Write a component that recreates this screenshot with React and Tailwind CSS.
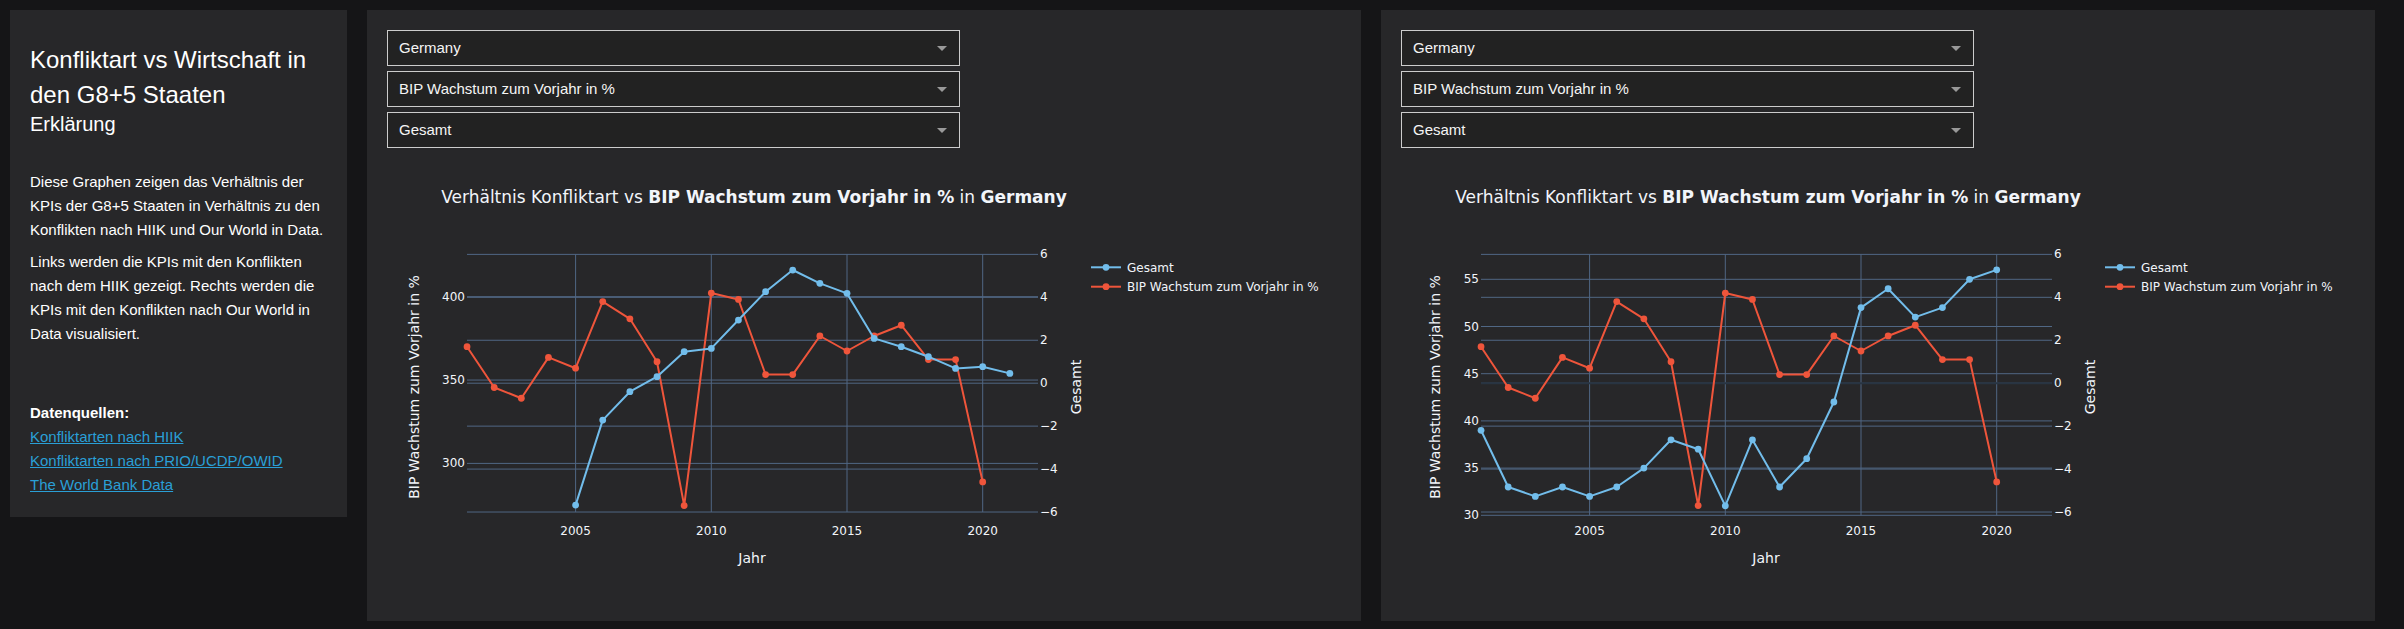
import React from 'react';

// Datenreihen (aus den Graphen abgelesen)
const YEARS_BIP = [2001, 2002, 2003, 2004, 2005, 2006, 2007, 2008, 2009, 2010, 2011, 2012, 2013, 2014, 2015, 2016, 2017, 2018, 2019, 2020];
const BIP = [1.7, -0.2, -0.7, 1.2, 0.7, 3.8, 3.0, 1.0, -5.7, 4.2, 3.9, 0.4, 0.4, 2.2, 1.5, 2.2, 2.7, 1.1, 1.1, -4.6];

const HIIK = [
  [2005, 275], [2006, 326], [2007, 343], [2008, 352], [2009, 367], [2010, 369], [2011, 386],
  [2012, 403], [2013, 416], [2014, 408], [2015, 402], [2016, 375], [2017, 370], [2018, 364],
  [2019, 357], [2020, 358], [2021, 354],
];

const OWID = [
  [2001, 39], [2002, 33], [2003, 32], [2004, 33], [2005, 32], [2006, 33], [2007, 35], [2008, 38],
  [2009, 37], [2010, 31], [2011, 38], [2012, 33], [2013, 36], [2014, 42], [2015, 52], [2016, 54],
  [2017, 51], [2018, 52], [2019, 55], [2020, 56],
];

const GRID = '#506784';
const BLUE = '#72bdeb';
const RED = '#ef553b';
const FONT = '"DejaVu Sans", Verdana, sans-serif';

const xOf = (year) => 188.6 + (year - 2005) * 27.14;
const yRight = (v) => 223.2 - v * 21.47;

function Series({ points, color }) {
  const d = points.map(([x, y], i) => `${i ? 'L' : 'M'}${x.toFixed(1)},${y.toFixed(1)}`).join(' ');
  return (
    <g>
      <path d={d} fill="none" stroke={color} strokeWidth="2" strokeLinejoin="round" />
      {points.map(([x, y], i) => (
        <circle key={i} cx={x} cy={y} r="3.4" fill={color} />
      ))}
    </g>
  );
}

function Chart({ leftTicks, yLeft, blue, leftTitleX, bottom, zeroline }) {
  const top = 94.3;
  const x0 = 80;
  const x1 = 651;

  const bluePts = blue.map(([yr, v]) => [xOf(yr), yLeft(v)]);
  const redPts = YEARS_BIP.map((yr, i) => [xOf(yr), yRight(BIP[i])]);

  return (
    <svg width="955" height="450" viewBox="0 0 955 450" className="block mt-[12px]" style={{ fontFamily: FONT }}>
      {/* Titel */}
      <text x="367" y="43" textAnchor="middle" fontSize="17" fill="#f2f5fa">
        Verhältnis Konfliktart vs <tspan fontWeight="700">BIP Wachstum zum Vorjahr in %</tspan> in{' '}
        <tspan fontWeight="700">Germany</tspan>
      </text>

      {/* vertikale Gitterlinien */}
      {[2005, 2010, 2015, 2020].map((yr) => (
        <g key={yr}>
          <line x1={xOf(yr)} x2={xOf(yr)} y1={top} y2={bottom} stroke={GRID} strokeWidth="1" />
          <text x={xOf(yr)} y="375" textAnchor="middle" fontSize="12" fill="#f2f5fa">{yr}</text>
        </g>
      ))}

      {/* rechte Achse */}
      {[6, 4, 2, 0, -2, -4, -6].map((v) => (
        <g key={v}>
          <line x1={x0} x2={x1} y1={yRight(v)} y2={yRight(v)} stroke={GRID} strokeWidth="1" />
          <text x="653" y={yRight(v) + 4} fontSize="12" fill="#f2f5fa">
            {v < 0 ? `\u2212${-v}` : v}
          </text>
        </g>
      ))}
      {zeroline && <line x1={x0} x2={x1} y1={yRight(0)} y2={yRight(0)} stroke="#283442" strokeWidth="2" />}

      {/* linke Achse */}
      {leftTicks.map((v) => (
        <g key={v}>
          <line x1={x0} x2={x1} y1={yLeft(v)} y2={yLeft(v)} stroke={GRID} strokeWidth="1" />
          <text x="78" y={yLeft(v) + 4} textAnchor="end" fontSize="12" fill="#f2f5fa">{v}</text>
        </g>
      ))}

      <Series points={redPts} color={RED} />
      <Series points={bluePts} color={BLUE} />

      {/* Achsentitel */}
      <text x="365" y="403" textAnchor="middle" fontSize="14" fill="#f2f5fa">Jahr</text>
      <text
        x={leftTitleX}
        y="227"
        textAnchor="middle"
        dominantBaseline="central"
        fontSize="14"
        fill="#f2f5fa"
        transform={`rotate(-90 ${leftTitleX} 227)`}
      >
        BIP Wachstum zum Vorjahr in %
      </text>
      <text
        x="689"
        y="227"
        textAnchor="middle"
        dominantBaseline="central"
        fontSize="14"
        fill="#f2f5fa"
        transform="rotate(-90 689 227)"
      >
        Gesamt
      </text>

      {/* Legende */}
      <line x1="704" x2="734" y1="107.3" y2="107.3" stroke={BLUE} strokeWidth="2" />
      <circle cx="719" cy="107.3" r="3.4" fill={BLUE} />
      <text x="740" y="111.5" fontSize="12" fill="#f2f5fa">Gesamt</text>
      <line x1="704" x2="734" y1="126.7" y2="126.7" stroke={RED} strokeWidth="2" />
      <circle cx="719" cy="126.7" r="3.4" fill={RED} />
      <text x="740" y="130.9" fontSize="12" fill="#f2f5fa">BIP Wachstum zum Vorjahr in %</text>
    </svg>
  );
}

function Dropdown({ value }) {
  return (
    <div className="w-[573px] h-[36px] flex items-center justify-between border border-[#cccccc] bg-[#222222] pl-[11px] pr-[12px]">
      <span className="text-[15px] text-[#f5f5f5]">{value}</span>
      <span className="w-0 h-0 border-l-[5px] border-r-[5px] border-t-[5px] border-l-transparent border-r-transparent border-t-[#999999]" />
    </div>
  );
}

function Panel({ children }) {
  return (
    <div className="w-[994px] h-[611px] bg-[#272729] px-5 pt-5">
      <div className="flex flex-col gap-[5px]">
        <Dropdown value="Germany" />
        <Dropdown value="BIP Wachstum zum Vorjahr in %" />
        <Dropdown value="Gesamt" />
      </div>
      {children}
    </div>
  );
}

export default function App() {
  return (
    <div
      className="w-[2404px] h-[629px] bg-[#151517] flex items-start gap-5 pl-[10px] pt-[10px] overflow-hidden"
      style={{ fontFamily: '"Liberation Sans", Arial, sans-serif' }}
    >
      {/* Seitenleiste */}
      <div className="w-[337px] h-[507px] shrink-0 bg-[#272729] px-5 pt-8 text-white">
        <h2 className="text-[24px] leading-[35px] font-normal">Konfliktart vs Wirtschaft in den G8+5 Staaten</h2>
        <h4 className="text-[20px] leading-[24px]">Erklärung</h4>
        <p className="mt-[34px] text-[15px] leading-[24px]">
          Diese Graphen zeigen das Verhältnis der KPIs der G8+5 Staaten in Verhältnis zu den Konflikten nach HIIK
          und Our World in Data.
        </p>
        <p className="mt-2 text-[15px] leading-[24px]">
          Links werden die KPIs mit den Konflikten nach dem HIIK gezeigt. Rechts werden die KPIs mit den Konflikten
          nach Our World in Data visualisiert.
        </p>
        <div className="mt-[55px] text-[15px] leading-[24px]">
          <p className="font-bold">Datenquellen:</p>
          <a href="#" className="block text-[#2a9fd6] underline">Konfliktarten nach HIIK</a>
          <a href="#" className="block text-[#2a9fd6] underline">Konfliktarten nach PRIO/UCDP/OWID</a>
          <a href="#" className="block text-[#2a9fd6] underline">The World Bank Data</a>
        </div>
      </div>

      <Panel>
        <Chart
          leftTicks={[400, 350, 300]}
          yLeft={(v) => 136.7 - (v - 400) * 1.667}
          blue={HIIK}
          leftTitleX={26.6}
          bottom={352}
        />
      </Panel>

      <Panel>
        <Chart
          leftTicks={[55, 50, 45, 40, 35, 30]}
          yLeft={(v) => 119.3 - (v - 55) * 9.44}
          blue={OWID}
          leftTitleX={34}
          bottom={355.3}
          zeroline
        />
      </Panel>
    </div>
  );
}
